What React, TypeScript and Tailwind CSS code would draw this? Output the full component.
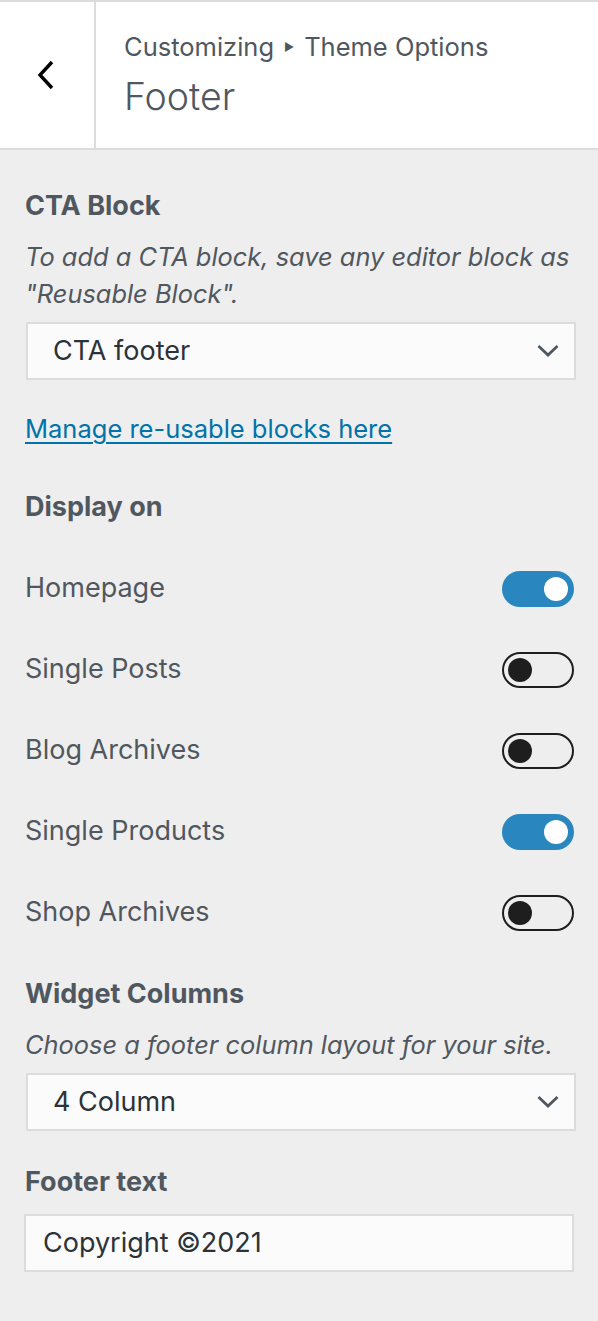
import { useState } from 'react'

function Chevron() {
  return (
    <svg width="22" height="14" viewBox="0 0 22 14" className="shrink-0">
      <path d="M1.5 2 L11 11 L20.5 2" fill="none" stroke="#50575e" strokeWidth="2.8" />
    </svg>
  )
}

function SelectBox({ value }: { value: string }) {
  return (
    <div className="ml-[1px] flex h-[58px] w-[550px] items-center justify-between border-2 border-[#dcdcde] bg-[#fbfbfc] pl-[25px] pr-[15px] text-[27px] text-[#2c3338]">
      <span>{value}</span>
      <Chevron />
    </div>
  )
}

function Toggle({ on }: { on: boolean }) {
  if (on) {
    return (
      <div className="mr-[-1px] flex h-[36px] w-[72px] items-center justify-end rounded-full bg-[#2a86bf] pr-[6px]">
        <div className="h-[24px] w-[24px] rounded-full bg-white" />
      </div>
    )
  }
  return (
    <div className="mr-[-1px] flex h-[36px] w-[72px] items-center rounded-full border-2 border-[#1e1e1e] pl-[4px]">
      <div className="h-[24px] w-[24px] rounded-full bg-[#1e1e1e]" />
    </div>
  )
}

const displayRows = [
  { label: 'Homepage', on: true },
  { label: 'Single Posts', on: false },
  { label: 'Blog Archives', on: false },
  { label: 'Single Products', on: true },
  { label: 'Shop Archives', on: false },
]

export default function App() {
  const [rows] = useState(displayRows)

  return (
    <div className="min-h-[1321px] w-full bg-[#eeeeee] font-['Inter',sans-serif] text-[#50575e]">
      {/* header */}
      <div className="flex h-[150px] border-t-2 border-b-2 border-[#dcdcde] bg-white">
        <div className="flex w-[96px] shrink-0 items-center justify-center border-r-2 border-[#dcdcde] pr-[2px]">
          <svg width="20" height="30" viewBox="0 0 20 30">
            <path d="M16 2 L4 15 L16 28" fill="none" stroke="#000" strokeWidth="3.4" />
          </svg>
        </div>
        <div className="flex flex-col pl-[28px] pt-[30px]">
          <div className="flex items-center text-[25.5px] leading-[30px]">
            <span>Customizing</span>
            <span className="mx-[10px] text-[11px]">▶</span>
            <span>Theme Options</span>
          </div>
          <div className="mt-[13px] text-[37.5px] leading-[44px] font-light">Footer</div>
        </div>
      </div>

      {/* body */}
      <div className="px-[25px] pt-[40px]">
        <div className="text-[27px] leading-[32px] font-bold">CTA Block</div>
        <div className="mt-[16px] text-[25.4px] leading-[37px] italic">
          To add a CTA block, save any editor block as "Reusable Block".
        </div>
        <div className="mt-[10px]">
          <SelectBox value="CTA footer" />
        </div>
        <a href="#" className="mt-[33px] block text-[25.5px] leading-[32px] text-[#0073aa] underline underline-offset-[4px]">
          Manage re-usable blocks here
        </a>

        <div className="mt-[46px] text-[27px] leading-[32px] font-bold">Display on</div>
        <div className="mt-[25px] flex flex-col">
          {rows.map((r) => (
            <div key={r.label} className="flex h-[81px] items-center justify-between text-[27px]">
              <span>{r.label}</span>
              <Toggle on={r.on} />
            </div>
          ))}
        </div>

        <div className="mt-[25px] text-[27px] leading-[32px] font-bold">Widget Columns</div>
        <div className="mt-[16px] text-[25.4px] leading-[37px] italic">
          Choose a footer column layout for your site.
        </div>
        <div className="mt-[10px]">
          <SelectBox value="4 Column" />
        </div>

        <div className="mt-[35px] text-[27px] leading-[32px] font-bold">Footer text</div>
        <div className="ml-[-1px] mt-[16px] flex h-[58px] w-[550px] items-center border-2 border-[#dcdcde] bg-[#fbfbfc] pl-[17px] text-[27px] text-[#2c3338]">
          Copyright ©2021
        </div>
      </div>
    </div>
  )
}
